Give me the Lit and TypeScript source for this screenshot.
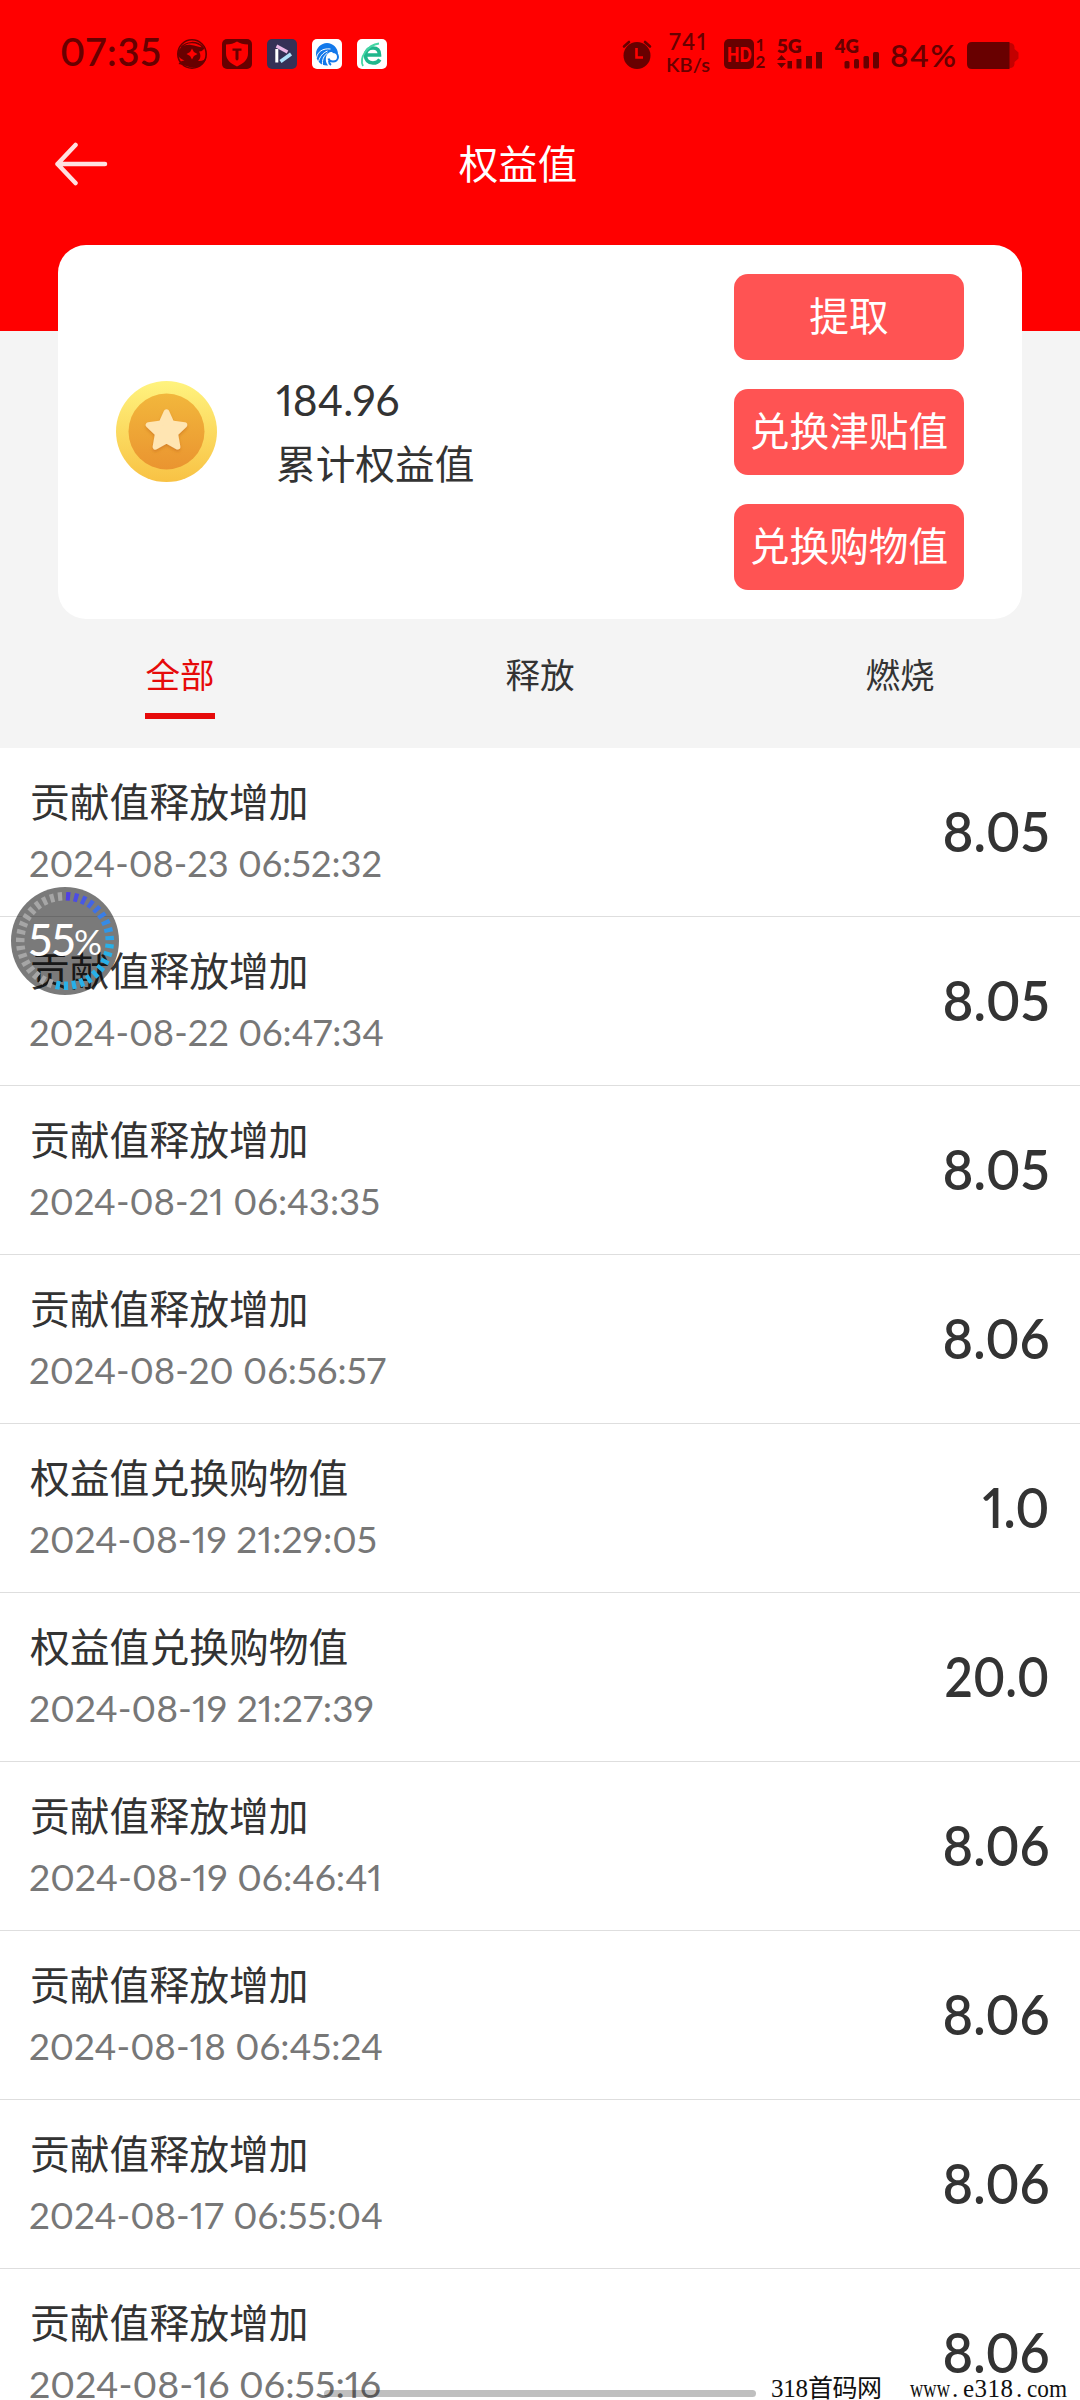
import { LitElement, html, css, svg } from "lit";
import { customElement, property } from "lit/decorators.js";

interface Entry {
  title: string;
  time: string;
  timeWidth: number;
  amount: string;
  amountWidth: number;
}

const RELEASE = "贡献值释放增加";
const EXCHANGE = "权益值兑换购物值";

const ENTRIES: Entry[] = [
  { title: RELEASE, time: "2024-08-23 06:52:32", timeWidth: 353, amount: "8.05", amountWidth: 107 },
  { title: RELEASE, time: "2024-08-22 06:47:34", timeWidth: 355, amount: "8.05", amountWidth: 107 },
  { title: RELEASE, time: "2024-08-21 06:43:35", timeWidth: 351, amount: "8.05", amountWidth: 107 },
  { title: RELEASE, time: "2024-08-20 06:56:57", timeWidth: 357, amount: "8.06", amountWidth: 107 },
  { title: EXCHANGE, time: "2024-08-19 21:29:05", timeWidth: 348, amount: "1.0", amountWidth: 67 },
  { title: EXCHANGE, time: "2024-08-19 21:27:39", timeWidth: 345, amount: "20.0", amountWidth: 105 },
  { title: RELEASE, time: "2024-08-19 06:46:41", timeWidth: 353, amount: "8.06", amountWidth: 107 },
  { title: RELEASE, time: "2024-08-18 06:45:24", timeWidth: 354, amount: "8.06", amountWidth: 107 },
  { title: RELEASE, time: "2024-08-17 06:55:04", timeWidth: 354, amount: "8.06", amountWidth: 107 },
  { title: RELEASE, time: "2024-08-16 06:55:16", timeWidth: 352, amount: "8.06", amountWidth: 107 },
];

@customElement("status-bar")
export class StatusBar extends LitElement {
  static styles = css`
    :host {
      display: flex;
      justify-content: space-between;
      height: 108px;
    }
    svg {
      display: block;
      font-family: Lato, "Liberation Sans", sans-serif;
      font-feature-settings: "pnum";
    }
    .ink {
      fill: #680000;
    }
    .cut {
      fill: #f00;
    }
  `;

  render() {
    return html`
      <svg width="400" height="108" viewBox="0 0 400 108">
        <text class="ink" x="60" y="65.500" font-size="38" font-weight="600" textLength="101">07:35</text>
        <g>
          <circle cx="192" cy="54" r="14.200" fill="none" stroke="#680000" stroke-width="1.600" />
          <path class="ink" d="M178 56c-1-7 5-12 13-11 5 .5 9 3 14 2-2 4-4 4.500-6 4.500 2 3 2 7-1 9.500 4 .5 7-1 8.500-4-1 7-8 11.500-15 10.500-4-.8-8-3-13-3.500 1.500-3 4-3.500 6-3.500-3-1.500-5-2.500-6.500-4.500z" />
          <path d="M181 47.500c5-6 16-7 22 0" fill="none" stroke="#680000" stroke-width="1.500" />
          <path class="cut" d="M192 48.500l1.900 3.600 3.600 1.900-3.600 1.900-1.900 3.600-1.900-3.600-3.600-1.900 3.600-1.900z" />
        </g>
        <g>
          <rect class="ink" x="222" y="39" width="30" height="30" rx="5" />
          <path class="cut" d="M237 41.500c3 2 6.500 2.800 11 3v9c0 6-4.500 10-11 13-6.500-3-11-7-11-13v-9c4.500-.2 8-1 11-3z" />
          <path class="ink" d="M232.500 48.500h9v2.200h-3v8.500l-1.500 1.500-1.500-1.500v-8.500h-3z" />
        </g>
        <g>
          <rect x="267" y="39" width="30" height="30" rx="5" fill="#353156" />
          <path d="M276.800 49v13.500" stroke="#fff" stroke-width="3" />
          <path d="M276.500 46l11 6" stroke="#eab8e6" stroke-width="3.200" />
          <path d="M280.500 61.500l10.500-7.500" stroke="#aee0fa" stroke-width="3.600" />
        </g>
        <g>
          <rect x="312" y="39" width="30" height="30" rx="5" fill="#fff" />
          <path d="M338 54c0-6-5-11-11-11s-11 5-11 11c0 7 5 12 12 11.500-2-2.500-2.500-5-2-8 .5-3.500 3-5.500 6-5.500 3 0 5 1.500 6 2z" fill="#1379ea" />
          <path d="M332.500 52c3.500 0 5.500 2.500 5.500 5 0 3-2.500 4.500-5 4.500-2.500 0-4-1-4.500-3M329 61c0 2 .5 3 2 4" fill="none" stroke="#1379ea" stroke-width="2" />
          <path d="M316.500 58c1-6 6-10 14-9M318.500 61.500c1.500-5 4-8.500 9-10.500M322.500 65c-.5-5 1-9 5-12" fill="none" stroke="#fff" stroke-width="1" />
        </g>
        <g>
          <rect x="357" y="39" width="30" height="30" rx="5" fill="#fff" />
          <path d="M366.500 55h13c0-5-2.500-7-6.500-7-5 0-7.500 3.500-7.500 7.500s2.500 7.500 7.500 7.500c3 0 5.500-1.200 6.800-3.500" fill="none" stroke="#1fb78c" stroke-width="3.600" />
          <path d="M363 66c-4-8 4-21 16-22.500" fill="none" stroke="#45d6a4" stroke-width="1.800" />
        </g>
      </svg>
      <svg width="480" height="108" viewBox="600 0 480 108">
        <g>
          <circle class="ink" cx="637" cy="55.500" r="13.500" />
          <path d="M624 46.500l5-4.500M650 46.500l-5-4.500" stroke="#680000" stroke-width="2.600" stroke-linecap="round" />
          <path d="M636.500 48v9.500h6.500" fill="none" stroke="#f00" stroke-width="2.600" />
        </g>
        <text class="ink" x="669" y="49.500" font-size="22" font-weight="600" textLength="37">741</text>
        <text class="ink" x="666" y="71.500" font-size="20" font-weight="600" textLength="44">KB/s</text>
        <rect class="ink" x="724" y="39" width="30" height="30" rx="5" />
        <text class="cut" x="727" y="61.500" font-size="20" font-weight="800" textLength="24.500" lengthAdjust="spacingAndGlyphs">HD</text>
        <text class="ink" x="756.500" y="51" font-size="17" font-weight="700">1</text>
        <text class="ink" x="755.500" y="67.500" font-size="17" font-weight="700">2</text>
        <text class="ink" x="777" y="53" font-size="19" font-weight="800" textLength="24.500" lengthAdjust="spacingAndGlyphs">5G</text>
        <path class="ink" d="M777 60l4.500-5 4.500 5zM777 63l4.500 5 4.500-5z" />
        <path class="ink" d="M787.500 61h4.500v7.500h-4.500zM796.500 59h5v9.500h-5zM806 56h6v12.500h-6zM816 52h6v16.500h-6z" />
        <text class="ink" x="834.500" y="53" font-size="19" font-weight="800" textLength="24.500" lengthAdjust="spacingAndGlyphs">4G</text>
        <rect class="ink" x="844.500" y="61" width="5" height="7.500" rx="1.500" />
        <rect class="ink" x="854" y="59" width="5" height="9.500" rx="1.500" />
        <rect class="ink" x="863.500" y="56" width="5.500" height="12.500" rx="1.500" />
        <rect class="ink" x="873" y="52" width="6" height="16.500" rx="1.500" />
        <text class="ink" x="890" y="66.500" font-size="31.500" font-weight="600" textLength="66">84%</text>
        <path d="M1008 43h2q4 0 4.500 4v2l4 3.500v6l-4 3.500v2q-.5 4-4.500 4h-2z" fill="#c30000" />
        <path class="ink" d="M972 42h37.500v27H972q-5 0-5-5V47q0-5 5-5z" />
      </svg>
    `;
  }
}

@customElement("usage-ball")
export class UsageBall extends LitElement {
  @property({ type: Number }) percent = 0;

  static styles = css`
    :host {
      display: block;
    }
    svg {
      display: block;
      font-family: Lato, "Liberation Sans", sans-serif;
      fill: #fff;
    }
  `;

  render() {
    const count = 35;
    const lit = Math.floor((count * this.percent) / 100);
    const ticks = Array.from({ length: count }, (_, i) => {
      const t = Math.min(1, i / 9);
      const color =
        i < lit
          ? `rgb(${Math.round(80 - 40 * t)},${Math.round(64 + 112 * t)},${Math.round(228 + 4 * t)})`
          : "#a6a6a6";
      return svg`<path d="M-2 -49h4.400l-.4 8.500h-4z" fill=${color} transform=${`translate(54 54) rotate(${3.8 + (i * 360) / count})`} />`;
    });
    return html`
      <svg width="108" height="108" viewBox="0 0 108 108">
        <circle cx="54" cy="54" r="54" fill="#000" fill-opacity=".52" />
        ${ticks}
        <text x="17.500" y="68.500" font-size="43.500" font-weight="500" textLength="47">${this.percent}</text>
        <text x="63" y="68" font-size="34" textLength="28" lengthAdjust="spacingAndGlyphs">%</text>
      </svg>
    `;
  }
}

@customElement("app-root")
export class AppRoot extends LitElement {
  static styles = css`
    :host {
      display: block;
      position: relative;
      width: 1080px;
      height: 2400px;
      overflow: hidden;
      background: #fff;
      color: #333;
      font-family: Lato, "Noto Sans CJK SC", sans-serif;
      font-feature-settings: "pnum";
    }
    .hero {
      box-sizing: border-box;
      height: 748px;
      background: linear-gradient(#f00 331px, #f4f4f4 331px);
    }
    .nav {
      display: grid;
      grid-template-columns: 116px 1fr 160px;
      align-items: center;
      height: 112px;
      margin-bottom: 25px;
    }
    .back {
      display: block;
      margin-left: 53px;
    }
    .title {
      text-align: center;
      color: #fff;
      font-size: 39.5px;
      line-height: 60px;
    }
    .card {
      display: flex;
      align-items: center;
      box-sizing: border-box;
      height: 374px;
      margin: 0 58px;
      padding: 0 58px;
      border-radius: 28px;
      background: #fff;
    }
    .coin {
      display: block;
      margin-right: 58px;
    }
    .balance {
      flex: 1;
      font-size: 39.7px;
      line-height: 64px;
      padding-bottom: 1px;
    }
    .sum {
      font-size: 42.5px;
    }
    .actions {
      display: flex;
      flex-direction: column;
      gap: 29px;
    }
    .action {
      width: 230px;
      height: 86px;
      border-radius: 14px;
      background: #ff5353;
      color: #fff;
      font-size: 39.7px;
      line-height: 84px;
      text-align: center;
      white-space: nowrap;
    }
    .tabs {
      display: grid;
      grid-template-columns: repeat(3, 1fr);
      justify-items: center;
      padding-top: 30px;
    }
    .tab {
      box-sizing: border-box;
      width: 70px;
      height: 70px;
      font-size: 34.6px;
      line-height: 51px;
      text-align: center;
      white-space: nowrap;
    }
    .active {
      color: #e60a0a;
      border-bottom: 6px solid #e60a0a;
    }
    .row {
      display: flex;
      align-items: center;
      justify-content: space-between;
      box-sizing: border-box;
      height: 169px;
      padding: 2px 30px 0;
      border-bottom: 1px solid #dedede;
    }
    .name {
      font-size: 39.8px;
      line-height: 62px;
    }
    .time {
      display: block;
      font-size: 37px;
      fill: #777;
      overflow: visible;
    }
    .amount {
      display: block;
      font-size: 55px;
      font-weight: 600;
      fill: #333;
      overflow: visible;
    }
    .ball {
      position: absolute;
      left: 11px;
      top: 887px;
    }
    .handle {
      position: absolute;
      left: 324px;
      top: 2390px;
      width: 432px;
      height: 7px;
      border-radius: 4px;
      background: rgba(0, 0, 0, 0.25);
    }
    .mark {
      position: absolute;
      left: 770px;
      top: 2370px;
      font-family: "Liberation Serif", "Noto Sans CJK SC", serif;
      font-size: 25px;
      fill: #111;
    }
  `;

  render() {
    return html`
      <div class="hero">
        <status-bar></status-bar>
        <div class="nav">
          <svg class="back" width="56" height="44" viewBox="0 0 56 44" fill="none" stroke="#ffe0e0" stroke-width="4.500" stroke-linecap="round" stroke-linejoin="round">
            <path d="M22.500 3L4.500 22l18 19M4.500 22h47.500" />
          </svg>
          <div class="title">权益值</div>
        </div>
        <div class="card">
          <svg class="coin" width="102" height="102" viewBox="0 0 102 102">
            <defs>
              <linearGradient id="rim" x1="0" y1="0" x2="0" y2="1">
                <stop offset="0" stop-color="#fff37e" />
                <stop offset="1" stop-color="#f8c244" />
              </linearGradient>
              <linearGradient id="face" x1="0" y1="0" x2="0" y2="1">
                <stop offset="0" stop-color="#f2b73c" />
                <stop offset="1" stop-color="#ea9430" />
              </linearGradient>
              <filter id="shade" x="-30%" y="-30%" width="160%" height="160%">
                <feDropShadow dx="0" dy="2" stdDeviation="1.500" flood-color="#c9701c" flood-opacity=".6" />
              </filter>
            </defs>
            <circle cx="50.500" cy="50.500" r="50.500" fill="url(#rim)" />
            <circle cx="50.500" cy="50.500" r="38" fill="url(#face)" />
            <path d="M50.500 31l5.200 11.300 12.800 1.700-9.200 8.800 2.300 13-11.100-6.200-11.100 6.200 2.300-13-9.200-8.800 12.800-1.700z" fill="#ffe5b2" stroke="#ffe5b2" stroke-width="5.500" stroke-linejoin="round" filter="url(#shade)" />
          </svg>
          <div class="balance">
            <div class="sum">184.96</div>
            <div>累计权益值</div>
          </div>
          <div class="actions">
            <div class="action">提取</div>
            <div class="action">兑换津贴值</div>
            <div class="action">兑换购物值</div>
          </div>
        </div>
        <div class="tabs">
          <div class="tab active">全部</div>
          <div class="tab">释放</div>
          <div class="tab">燃烧</div>
        </div>
      </div>
      ${ENTRIES.map(
        (e) => html`
          <div class="row">
            <div>
              <div class="name">${e.title}</div>
              <svg class="time" width="400" height="62">
                <text x="-1" y="43.500" textLength=${e.timeWidth} lengthAdjust="spacingAndGlyphs">${e.time}</text>
              </svg>
            </div>
            <svg class="amount" width="120" height="76">
              <text x=${119.5 - e.amountWidth} y="57" textLength=${e.amountWidth} lengthAdjust="spacingAndGlyphs">${e.amount}</text>
            </svg>
          </div>
        `,
      )}
      <usage-ball class="ball" .percent=${55}></usage-ball>
      <div class="handle"></div>
      <svg class="mark" width="310" height="30" viewBox="0 0 310 30">
        <text x="1" y="26.500" textLength="37">318</text>
        <text x="38" y="27" textLength="74">首码网</text>
        <text x="140" y="26.500" textLength="40" lengthAdjust="spacingAndGlyphs">www</text>
        <text x="182" y="26.500">.</text>
        <text x="193" y="26.500" textLength="50">e318</text>
        <text x="246" y="26.500">.</text>
        <text x="257" y="26.500" textLength="40" lengthAdjust="spacingAndGlyphs">com</text>
      </svg>
    `;
  }
}
